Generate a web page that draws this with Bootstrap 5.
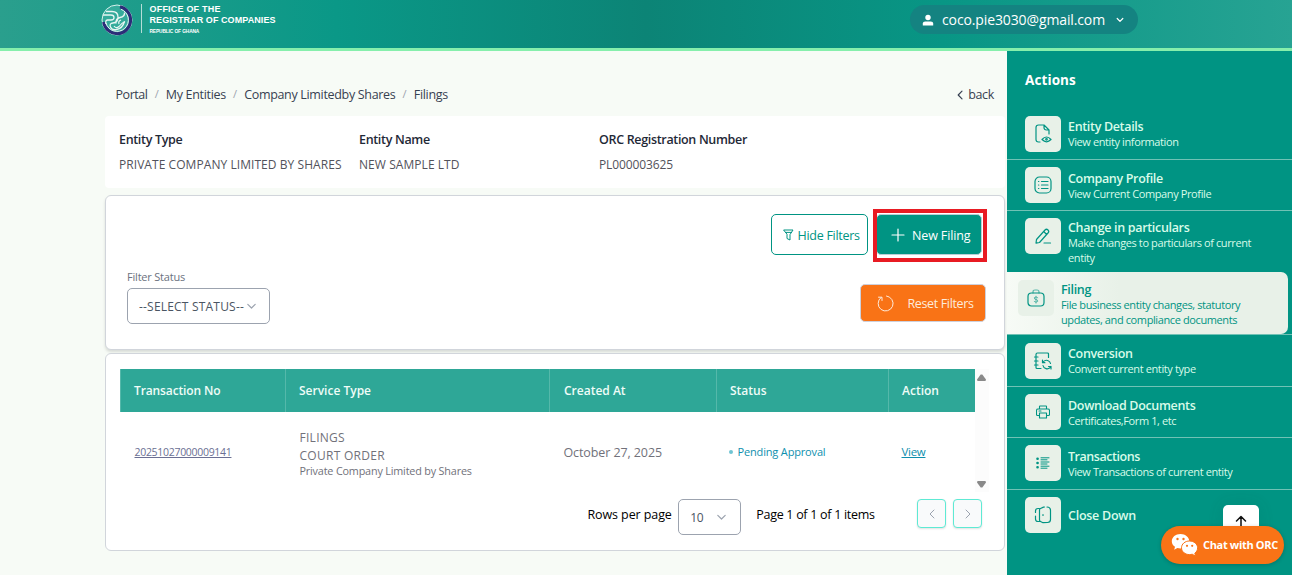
<!DOCTYPE html>
<html lang="en">
<head>
<meta charset="utf-8">
<meta name="viewport" content="width=device-width, initial-scale=1">
<title>Office of the Registrar of Companies - Filings</title>
<link href="https://cdn.jsdelivr.net/npm/bootstrap@5.3.0/dist/css/bootstrap.min.css" rel="stylesheet">
<style>
:root{--teal:#009483;--mint:#e8f1e8;--line:#d1d5db}
body{font-family:"Open Sans","Noto Sans",sans-serif;font-size:12.5px;line-height:18px;background:#f7fbf6;color:#374151;height:575px;overflow:hidden}
svg{display:block;flex:none}
svg.stroke-icon{fill:none;stroke:currentColor;stroke-width:1.2;stroke-linecap:round;stroke-linejoin:round}
.topbar{height:51px;border-bottom:3px solid #86efac;background:linear-gradient(90deg,#2a9f8d 0%,#0a9887 26%,#0c8476 50%,#089685 73%,#27a393 100%)}
.brand{margin-left:101px;padding-top:4px}
.brand-text{margin-left:8px;padding-left:7.500px;border-left:1px solid #b5ddd7;height:29px;font:700 9px/11px "Liberation Sans",sans-serif;color:#fff;white-space:nowrap}
.brand-text .sub{font-size:4.800px;line-height:8px;letter-spacing:-.1px;padding-top:2px}
.user-pill{width:228px;height:29px;margin:5px 154px 0 0;padding:0 14px 0 12px;border-radius:15px;background:#148381;color:#fff;font-size:14px;letter-spacing:-.12px;border:0}
.shell{height:524px}
.main{width:1007px;padding:34px 2px 0 105px}
.crumbs{height:18px;padding:1px 11px 0 10.500px;letter-spacing:-.32px;white-space:nowrap}
.crumbs .sep{color:#9ca3af;font-size:11px;width:18.300px;text-align:center;letter-spacing:0;line-height:16px}
.entity{margin-top:13px;height:72px;border-radius:4px;background:#fff;padding:15px 14px;color:#52525b}
.entity dt{font-weight:600;color:#1f2937;letter-spacing:-.33px;line-height:17px}
.entity dd{margin:8px 0 0;font-size:12px;line-height:17px;white-space:nowrap;letter-spacing:.06px}
.panel{background:#fff;border:1px solid var(--line);border-radius:6px}
.filters{margin-top:7px;height:155px;padding:18px;box-shadow:0 2px 3px rgba(0,0,0,.13)}
.act{display:flex;align-items:center;height:41px;border-radius:5px;font-size:12.500px;white-space:nowrap;padding:2px 0 0;line-height:18px}
.act-hide{width:97px;border:1px solid var(--teal);background:#fff;color:var(--teal);letter-spacing:-.28px;padding-left:11px}
.act-new{width:106px;border:1px solid #b9cfd6;background:var(--teal);color:#fff;letter-spacing:-.13px;padding-left:14px}
.act-reset{width:126px;height:38px;border:1px solid #cdd0dc;background:#f97316;color:#fdebdc;letter-spacing:-.36px;padding-left:16px}
.act svg,.picker svg{margin-top:-2px}
.spotlight{position:absolute;inset:-5px -5px -7px -3px;border:4px solid #e81b23;pointer-events:none}
.field-label{font-size:11px;letter-spacing:-.2px;color:#6b7280;line-height:16px;margin-bottom:3px}
.picker{display:flex;align-items:center;height:36px;border:1px solid #9ca3af;border-radius:5px;background:#fff;font-size:12px;color:#4b5563;padding:2px 0 0}
.picker svg,.pager svg{color:#9ca3af}
.grid-panel{margin-top:3px;height:198px;padding:15px 15px 0 14px}
.scroll-zone{height:123px}
.filing-table{width:854px;table-layout:fixed;margin:0;font-size:12px;color:#71717a}
.filing-table th{height:43px;background:#2ea797;color:#effcf7;font-weight:600;padding:0 0 0 13px;border:0;border-left:1px solid #55b8aa;vertical-align:middle}
.filing-table td{height:80px;padding:0 0 0 14px;border:0;vertical-align:middle;background:#fff;color:#71717a}
.filing-table td:nth-child(2),.filing-table td:nth-child(3){padding-top:2px}
.scroll-track{width:15px;height:123px;background:#fcfcfc;padding:5px 0 4px}
.pager{height:36px;margin-top:7px;color:#000;font-weight:500;letter-spacing:-.1px}
.step{width:29px;height:29px;padding:0;display:flex;align-items:center;justify-content:center;border:1px solid #5eead4;border-radius:4px;background:#f9fafb;box-shadow:0 1px 2px rgba(0,0,0,.12)}
.side{width:285px;background:var(--teal);color:#d8fbe9}
.side h2{font-size:13.500px;line-height:18px;font-weight:700;color:#fff;margin:20px 0 19px 18px;letter-spacing:.1px}
.entry{display:flex;align-items:flex-start;height:51px;padding:7px 20px 0 18px;border-bottom:1px solid #70c2b5;text-decoration:none;color:inherit}
.entry .tile{width:36px;height:36px;border-radius:5px;background:var(--mint);color:var(--teal);display:flex;align-items:center;justify-content:center;flex:none;margin-right:7px}
.entry b{display:block;font-weight:600;line-height:17px;letter-spacing:-.33px;white-space:nowrap}
.entry p{margin:-1px 0 0;font-size:11px;line-height:15px;letter-spacing:-.39px;white-space:nowrap}
.entry .txt{margin-top:2px}
.entry.tall{height:52px;padding-top:8px}
.entry.wrap3{height:61px;border-bottom:0}
.entry.wrap3 .txt{margin-top:1px}
.entry.current{height:62px;width:281px;padding:8px 0 0 11px;border:0;border-radius:0 7px 7px 0;background:linear-gradient(90deg,#f7fbf6,var(--mint) 40%);color:var(--teal)}
.entry.current .txt{margin-top:1px}
.current-row{height:63px;border-bottom:1px solid #70c2b5}
.to-top{position:absolute;left:1223px;top:505px;width:36px;height:36px;border-radius:5px;background:#fff;color:#111;border:0;padding:0;box-shadow:0 0 16px rgba(0,80,70,.12)}
.chat{position:absolute;left:1161px;top:526px;width:123px;height:38px;border-radius:19px;background:#f97316;color:#fff;border:0;padding:0 0 0 10px;font-size:11px;font-weight:700;letter-spacing:-.33px;white-space:nowrap;box-shadow:0 1px 4px rgba(0,0,0,.2)}
</style>
</head>
<body>
<header class="topbar d-flex justify-content-between align-items-start">
  <div class="brand d-flex align-items-start">
    <svg width="32" height="32" viewBox="0 0 32 32" fill="none">
      <circle cx="16" cy="16" r="15" fill="#35ab9b" stroke="#d6f0ec" stroke-width="1"/>
      <path d="M19 2.800A13.600 13.600 0 1 1 2.600 18" stroke="#2c2d78" stroke-width="3"/>
      <path d="M20 5.300A11.400 11.400 0 1 1 5 19" stroke="#e8f6f4" stroke-width="1"/>
      <path d="M2 11h8q3 0 3 2.500T10 16H6.500Q4 16.500 5 20M5 7.500h6q6 0 6 5.500t-5 6q-4 .5-2.500 4t6 2.500q6-1 8-8M15 19.500q-.5-5 4-6 5-1 4.500-5" stroke="#e8f6f4" stroke-width="1.300"/>
      <path d="M13 22q2 3 5 .5 2-3 6-5M18 20q-1-3 2-4" stroke="#e8f6f4" stroke-width="1.200"/>
    </svg>
    <div class="brand-text">
      <div style="letter-spacing:.2px">OFFICE OF THE</div>
      <div style="letter-spacing:.08px">REGISTRAR OF COMPANIES</div>
      <div class="sub">REPUBLIC OF GHANA</div>
    </div>
  </div>
  <button class="user-pill d-flex align-items-center">
    <svg width="12" height="12" viewBox="0 0 12 12" fill="currentColor"><circle cx="6" cy="3.500" r="2.700"/><path d="M.8 11.500V9.600q0-2 2.400-2h5.600q2.400 0 2.400 2v1.900z"/></svg>
    <span class="ms-2">coco.pie3030@gmail.com</span>
    <svg class="stroke-icon ms-auto" width="8" height="8" viewBox="0 0 8 8"><path d="M1.200 2.500 4 5.300 6.800 2.500"/></svg>
  </button>
</header>

<div class="shell d-flex">
  <main class="main">
    <nav class="crumbs d-flex justify-content-between">
      <div class="d-flex">
        <span style="letter-spacing:-.45px">Portal</span><span class="sep">/</span><span>My Entities</span><span class="sep">/</span><span>Company Limitedby Shares</span><span class="sep">/</span><span>Filings</span>
      </div>
      <span class="d-flex align-items-center"><svg class="stroke-icon me-1" width="8" height="10" viewBox="0 0 8 10"><path d="M6 1.200 2.200 5 6 8.800"/></svg>back</span>
    </nav>

    <dl class="entity d-flex mb-0">
      <div style="width:240px"><dt>Entity Type</dt><dd>PRIVATE COMPANY LIMITED BY SHARES</dd></div>
      <div style="width:240px"><dt>Entity Name</dt><dd>NEW SAMPLE LTD</dd></div>
      <div><dt>ORC Registration Number</dt><dd style="letter-spacing:-.1px">PL000003625</dd></div>
    </dl>

    <section class="panel filters">
      <div class="d-flex justify-content-end" style="gap:8px;padding-right:4px">
        <button class="act act-hide"><svg class="stroke-icon" style="stroke-width:1;margin-right:3.500px" width="11" height="12" viewBox="0 0 11 12"><path d="M1 1h9L7 5.600V11L4 9.500V5.600zM2.600 3.400h5.800"/></svg>Hide Filters</button>
        <div class="position-relative">
          <button class="act act-new"><svg class="stroke-icon" style="margin-right:7px" width="14" height="14" viewBox="0 0 14 14"><path d="M7 1v12M1 7h12"/></svg>New Filing</button>
          <span class="spotlight"></span>
        </div>
      </div>
      <div class="d-flex justify-content-between" style="margin-top:14px">
        <div style="margin-left:3px">
          <div class="field-label">Filter Status</div>
          <button class="picker" style="width:143px;padding-left:11px;letter-spacing:.2px">--SELECT STATUS--<svg class="stroke-icon" style="margin-left:3px" width="9" height="7" viewBox="0 0 9 7"><path d="M.8 1.300 4.500 5 8.200 1.300"/></svg></button>
        </div>
        <button class="act act-reset" style="margin-top:15px"><svg class="stroke-icon" style="stroke-width:1;margin-right:13.500px" width="17" height="17" viewBox="0 0 17 17"><path d="M9.500 1A7.500 7.500 0 1 1 4 2.500M1.500 2.200H5V5.500"/></svg>Reset Filters</button>
      </div>
    </section>

    <section class="panel grid-panel">
      <div class="scroll-zone d-flex">
        <table class="filing-table table">
          <colgroup><col style="width:165px"><col style="width:264px"><col style="width:167px"><col style="width:172px"><col style="width:86px"></colgroup>
          <thead><tr><th style="letter-spacing:-.12px">Transaction No</th><th>Service Type</th><th style="padding-left:14px">Created At</th><th>Status</th><th>Action</th></tr></thead>
          <tbody><tr>
            <td><a href="#" style="font-size:10.500px;letter-spacing:-.3px;color:#6b6f93">20251027000009141</a></td>
            <td><div style="letter-spacing:.28px">FILINGS<br>COURT ORDER</div><div style="font-size:10.800px;line-height:14px;letter-spacing:-.17px;margin-top:-1px">Private Company Limited by Shares</div></td>
            <td style="font-size:12.500px;letter-spacing:-.1px">October 27, 2025</td>
            <td style="padding-left:12px"><div class="d-flex align-items-center" style="font-size:11px;font-weight:500;letter-spacing:-.16px;color:#0e8fae"><span class="rounded-circle" style="width:4px;height:4px;margin-right:5px;background:#6fc4d3"></span>Pending Approval</div></td>
            <td style="padding-left:13px"><a href="#" style="font-size:11.500px;font-weight:500;letter-spacing:-.29px;color:#0e8fae">View</a></td>
          </tr></tbody>
        </table>
        <div class="scroll-track d-flex flex-column justify-content-between align-items-center">
          <svg width="9" height="7" viewBox="0 0 9 7" fill="#898989"><path d="M3.700.5h1.600L9 5.500 8.500 7h-8L0 5.500z"/></svg>
          <svg width="9" height="7" viewBox="0 0 9 7" fill="#898989"><path d="M3.700 6.500h1.600L9 1.500 8.500 0h-8L0 1.500z"/></svg>
        </div>
      </div>
      <div class="pager d-flex align-items-start">
        <span style="margin:7px 6.500px 0 467.500px">Rows per page</span>
        <button class="picker" style="width:63px;padding-left:11px;letter-spacing:-.3px">10<svg class="stroke-icon" style="margin-left:14px" width="9" height="7" viewBox="0 0 9 7"><path d="M.8 1.300 4.500 5 8.200 1.300"/></svg></button>
        <span style="margin:7px 0 0 15px;letter-spacing:-.29px">Page 1 of 1 of 1 items</span>
        <div class="d-flex ms-auto" style="gap:7px;padding-right:7px">
          <button class="step"><svg class="stroke-icon" style="stroke-width:1" width="6" height="10" viewBox="0 0 6 10"><path d="M5 1 1 5l4 4"/></svg></button>
          <button class="step"><svg class="stroke-icon" style="stroke-width:1" width="6" height="10" viewBox="0 0 6 10"><path d="m1 1 4 4-4 4"/></svg></button>
        </div>
      </div>
    </section>
  </main>

  <aside class="side">
    <h2>Actions</h2>
    <a class="entry tall" href="#"><span class="tile"><svg class="stroke-icon" width="18" height="20" viewBox="0 0 18 20"><path d="M6 18H4.500Q2 18 2 15.500v-12Q2 1 4.500 1H10l5 5v4M10 1v2.500Q10 6 12.500 6H15M8 15.500q4.500-5 9 0-4.500 4.500-9 0z"/><circle cx="12.500" cy="15.300" r=".8"/></svg></span><span class="txt"><b>Entity Details</b><p>View entity information</p></span></a>
    <a class="entry" href="#"><span class="tile"><svg class="stroke-icon" width="18" height="18" viewBox="0 0 18 18"><rect x="1" y="1" width="16" height="16" rx="4.500"/><path d="M4.500 5.500h.3M4.500 9h.3M4.500 12.500h.3M7.500 5.500H14M7.500 9H14M7.500 12.500H14"/></svg></span><span class="txt" style="margin-top:3px"><b>Company Profile</b><p>View Current Company Profile</p></span></a>
    <a class="entry wrap3" href="#"><span class="tile"><svg class="stroke-icon" width="18" height="18" viewBox="0 0 18 18"><path d="M2.500 12.500 11 3q1.500-1.500 3 0t0 3l-8.500 9.500L2 16.200zM9.700 4.500l3 3M10 16h6.500"/></svg></span><span class="txt"><b>Change in particulars</b><p>Make changes to particulars of current<br>entity</p></span></a>
    <div class="current-row"><a class="entry current" href="#"><span class="tile"><svg class="stroke-icon" width="18" height="20" viewBox="0 0 18 20"><path d="M6 5V4q0-2 2-2h2q2 0 2 2v1" opacity=".6"/><rect x="1" y="5" width="16" height="13" rx="3.500"/><path d="M10.800 9.700Q9 8.300 7.400 9.500q-.5 1.800 1.600 2t1.700 2Q9 15 7.200 13.500M9 8.200v7" stroke-width=".7" opacity=".8"/></svg></span><span class="txt"><b>Filing</b><p>File business entity changes, statutory<br>updates, and compliance documents</p></span></a></div>
    <a class="entry tall" href="#"><span class="tile"><svg class="stroke-icon" width="20" height="20" viewBox="0 0 20 20"><path d="M15.500 6.500V3q0-1-1-1H4.500q-1.500 0-1.500 1.500v13q0 1 1 1h4M1.500 6H5M1.500 10H5M1.500 14H5M9.500 11.500V9.200M9.500 11.700h2.400M9.700 11.500q2-3 5-2 2.500 1 2.800 3M18 18v-2.500h-2.500M18 15.500q-2 3-5 2.200-2.500-.7-3-3.200"/></svg></span><span class="txt"><b>Conversion</b><p>Convert current entity type</p></span></a>
    <a class="entry" href="#"><span class="tile"><svg class="stroke-icon" style="stroke-width:1.100" width="14" height="14" viewBox="0 0 14 14"><path d="M3.500 4V1.500q0-.5.500-.5h6q.5 0 .5.500V4M3.500 10.500h-2q-1 0-1-1v-4Q.500 4 2 4h10q1.500 0 1.500 1.500v4q0 1-1 1h-2M3.500 8h7v5h-7zM3 6h2"/></svg></span><span class="txt" style="margin-top:3px"><b>Download Documents</b><p>Certificates,Form 1, etc</p></span></a>
    <a class="entry tall" href="#" style="padding-top:7px"><span class="tile"><svg class="stroke-icon" style="stroke-width:1" width="14" height="12" viewBox="0 0 14 12"><path d="M5 .8h8M5 2.800h6M5 5h8M5 7h6M5 9.200h8M5 11.200h6"/><path d="M1.500 1.800h.1M1.500 6h.1M1.500 10.200h.1" stroke-width="2.600"/></svg></span><span class="txt" style="margin-top:3px"><b style="letter-spacing:-.45px">Transactions</b><p>View Transactions of current entity</p></span></a>
    <a class="entry border-0" href="#"><span class="tile"><svg class="stroke-icon" width="18" height="20" viewBox="0 0 18 20"><path d="M6.500 3.500 9 2.300M9 17.700 6.500 16.500q-1-.4-1-1.500V5q0-1.100 1-1.500M6.500 3.500 9.500 2.100 M13 2q3.500 0 3.500 3.500v9q0 3-3 3l-4.500.2M9.500 2h1M5.500 3.500H4Q1.500 3.500 1.500 6v1.500M1.500 11v3q0 2.500 2.500 2.500h1.500M9 9.500v1"/></svg></span><span class="txt" style="margin-top:10px"><b style="letter-spacing:-.25px">Close Down</b></span></a>
  </aside>
</div>

<button class="to-top"><svg class="stroke-icon mx-auto" style="margin-top:-5px;stroke-width:1.500" width="12" height="12" viewBox="0 0 12 12"><path d="M6 11.500V1.500M1.500 6 6 1.500 10.500 6"/></svg></button>
<button class="chat d-flex align-items-center"><svg width="28" height="24" viewBox="0 0 28 24"><path fill="#fff" d="M9.500 1C4.500 1 .8 4.200.8 8.200c0 2.400 1.200 4.300 3.200 5.600l-.8 2.900 3.200-1.600q1.500.4 3.100.4c4.900 0 8.800-3.200 8.800-7.200S14.500 1 9.500 1z"/><path fill="#fff" stroke="#f97316" stroke-width="1" d="M18.500 8c-4.500 0-8 3-8 6.800s3.500 6.800 8 6.800q1.400 0 2.700-.4l3.400 2-.8-3c1.800-1.200 2.800-3.200 2.800-5.400 0-3.800-3.600-6.800-8.100-6.800z"/><g fill="#f97316"><circle cx="6.500" cy="6" r="1.200"/><circle cx="12.500" cy="6" r="1.200"/><circle cx="16" cy="12.800" r="1.100"/><circle cx="21.200" cy="12.800" r="1.100"/></g></svg><span style="margin-left:4px">Chat with ORC</span></button>
<script src="https://cdn.jsdelivr.net/npm/bootstrap@5.3.0/dist/js/bootstrap.bundle.min.js"></script>
</body>
</html>
